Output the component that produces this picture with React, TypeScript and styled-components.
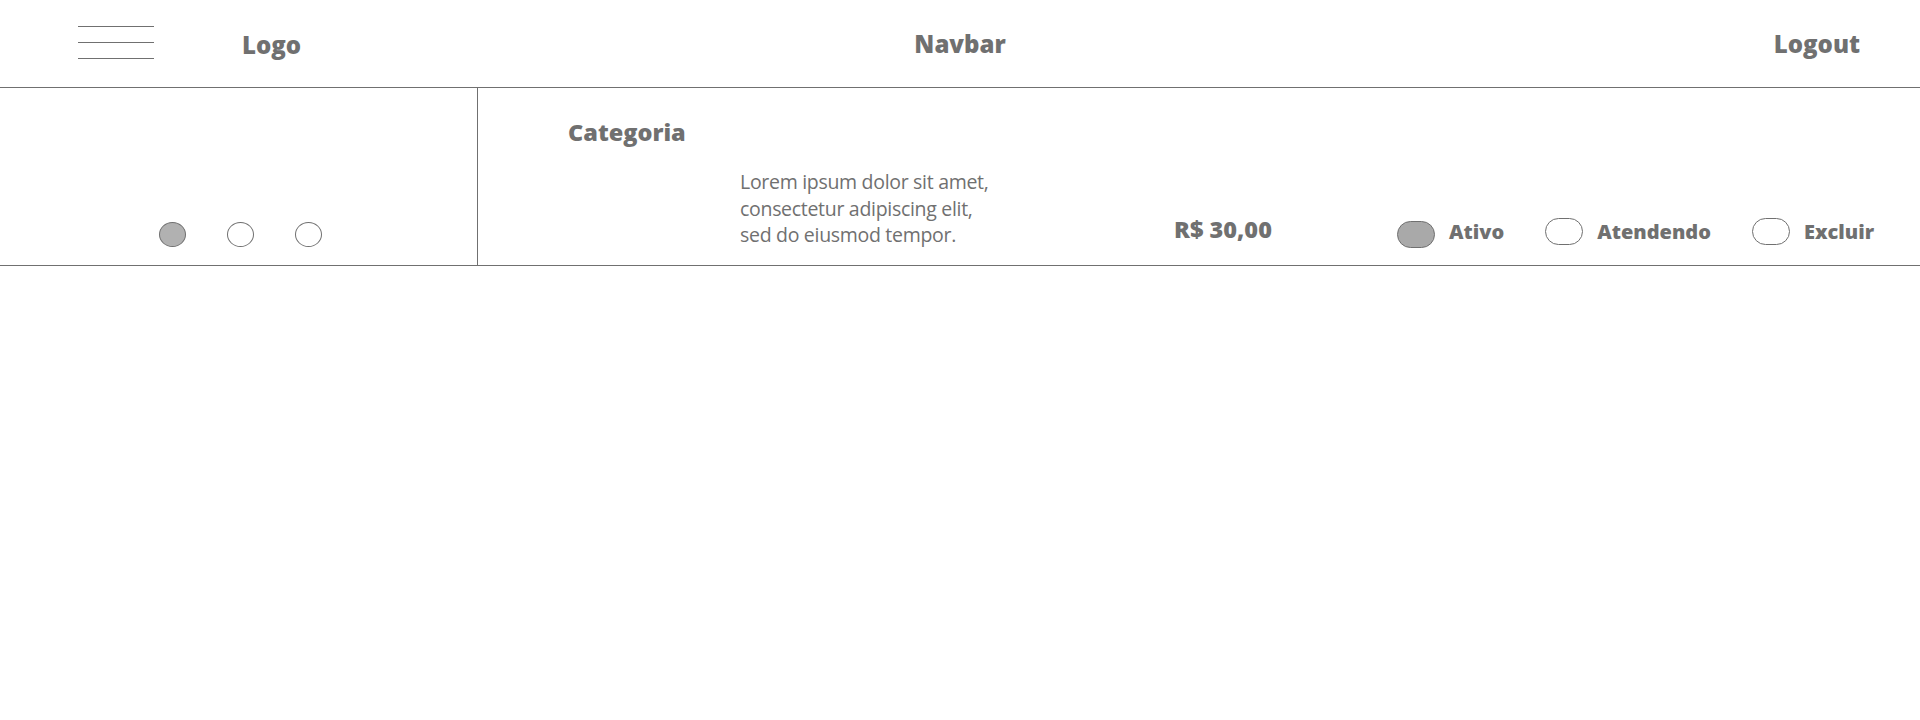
import React from "react";
import styled, { createGlobalStyle } from "styled-components";

const ink = "#707070";

const GlobalStyle = createGlobalStyle`
  html, body {
    margin: 0;
    padding: 0;
    background: #ffffff;
  }
  body {
    font-family: "Open Sans", "Noto Sans", "Liberation Sans", sans-serif;
    color: ${ink};
  }
  * { box-sizing: border-box; }
`;

const Page = styled.div`
  width: 1920px;
  min-height: 720px;
  background: #fff;
`;

const Header = styled.header`
  height: 88px;
  border-bottom: 1px solid ${ink};
  display: grid;
  grid-template-columns: 1fr auto 1fr;
  align-items: center;
`;

const HeaderLeft = styled.div`
  display: flex;
  align-items: center;
  gap: 88px;
  padding-left: 78px;
`;

const HeaderRight = styled.div`
  display: flex;
  justify-content: flex-end;
  padding-right: 60px;
`;

const Burger = styled.button`
  display: flex;
  flex-direction: column;
  gap: 15px;
  width: 76px;
  padding: 0;
  margin: -2px 0 0 0;
  border: 0;
  background: transparent;
  cursor: pointer;
`;

const BurgerLine = styled.span`
  display: block;
  height: 1px;
  width: 100%;
  background: ${ink};
`;

const HeaderText = styled.span<{ $offset?: number }>`
  font-weight: 800;
  font-size: 24px;
  line-height: 30px;
  color: ${ink};
  margin-top: ${(p) => p.$offset ?? 0}px;
`;

const Row = styled.section`
  height: 178px;
  border-bottom: 1px solid ${ink};
  display: flex;
`;

const SidePanel = styled.div`
  flex: 0 0 478px;
  border-right: 1px solid ${ink};
  display: flex;
  align-items: flex-end;
  justify-content: center;
  gap: 41px;
  padding: 0 0 18px 4px;
`;

const Dot = styled.span<{ $filled?: boolean }>`
  display: block;
  width: 27px;
  height: 25px;
  border-radius: 50%;
  border: 1px solid ${ink};
  background: ${(p) => (p.$filled ? "#b1b1b1" : "#fff")};
`;

const MainPanel = styled.div`
  flex: 1;
  display: flex;
  flex-direction: column;
  justify-content: space-between;
  padding: 29px 0 16px 90px;
`;

const Title = styled.h2`
  margin: 0;
  font-size: 23.5px;
  line-height: 30px;
  font-weight: 800;
  color: ${ink};
`;

const Details = styled.div`
  display: flex;
  align-items: flex-end;
`;

const Description = styled.p`
  flex: 0 0 434px;
  margin: 0 0 0 172px;
  font-size: 19.5px;
  letter-spacing: -0.3px;
  line-height: 26.7px;
  font-weight: 400;
  color: ${ink};
`;

const Price = styled.span`
  flex: 0 0 223px;
  font-size: 23.5px;
  line-height: 26px;
  font-weight: 800;
  color: ${ink};
  margin-bottom: 7px;
`;

const StatusGroup = styled.div`
  display: flex;
  align-items: flex-end;
  gap: 41px;
  margin-bottom: 4px;
`;

const Status = styled.label`
  display: inline-flex;
  align-items: center;
  gap: 14px;
  font-size: 20px;
  line-height: 26px;
  font-weight: 800;
  color: ${ink};
  cursor: pointer;
`;

const Toggle = styled.span<{ $on?: boolean }>`
  display: block;
  width: 38px;
  height: 27px;
  border-radius: 14px;
  border: 1px solid ${ink};
  background: ${(p) => (p.$on ? "#a9a9a9" : "#fff")};
  margin: ${(p) => (p.$on ? "3px 0 -3px" : "0")};
`;

const statuses = [
  { label: "Ativo", on: true },
  { label: "Atendendo", on: false },
  { label: "Excluir", on: false },
];

export default function App() {
  return (
    <Page>
      <GlobalStyle />
      <Header>
        <HeaderLeft>
          <Burger aria-label="Menu">
            <BurgerLine />
            <BurgerLine />
            <BurgerLine />
          </Burger>
          <HeaderText $offset={2}>Logo</HeaderText>
        </HeaderLeft>
        <HeaderText>Navbar</HeaderText>
        <HeaderRight>
          <HeaderText>Logout</HeaderText>
        </HeaderRight>
      </Header>
      <Row>
        <SidePanel>
          <Dot $filled />
          <Dot />
          <Dot />
        </SidePanel>
        <MainPanel>
          <Title>Categoria</Title>
          <Details>
            <Description>
              Lorem ipsum dolor sit amet,
              <br />
              consectetur adipiscing elit,
              <br />
              sed do eiusmod tempor.
            </Description>
            <Price>R$ 30,00</Price>
            <StatusGroup>
              {statuses.map((s) => (
                <Status key={s.label}>
                  <Toggle $on={s.on} />
                  {s.label}
                </Status>
              ))}
            </StatusGroup>
          </Details>
        </MainPanel>
      </Row>
    </Page>
  );
}
